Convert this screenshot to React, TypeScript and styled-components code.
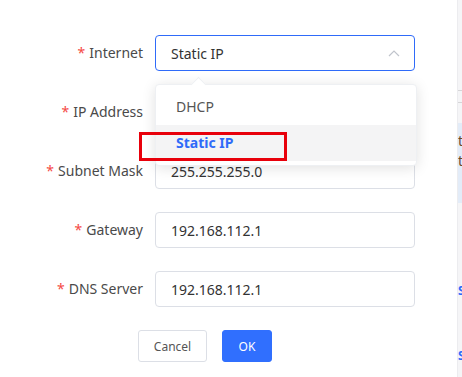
import React from 'react'
import styled, { createGlobalStyle } from 'styled-components'

const GlobalStyle = createGlobalStyle`
	html, body {
		margin: 0;
		padding: 0;
		background: #fff;
	}
	body {
		font-family: 'Noto Sans', 'Liberation Sans', sans-serif;
		font-size: 14px;
		color: #333;
	}
`

const Page = styled.div`
	display: flex;
	width: 462px;
	height: 377px;
	overflow: hidden;
`

const Modal = styled.div`
	position: relative;
	width: 457px;
	flex: none;
	background: #fff;
	padding-top: 35px;
	box-sizing: border-box;
`

const Row = styled.div`
	display: grid;
	grid-template-columns: 143px 260px;
	column-gap: 12px;
	align-items: center;
	height: 36px;
	margin-bottom: 23px;
`

const Label = styled.label`
	text-align: right;
	color: #4a4a4a;
	font-size: 14px;
	line-height: 20px;
	white-space: nowrap;
	&::before {
		content: '*';
		color: #f54a45;
		margin-right: 4px;
	}
`

const Field = styled.div<{ $focused?: boolean }>`
	position: relative;
	height: 36px;
	box-sizing: border-box;
	border: 1px solid ${p => (p.$focused ? '#2f6bf9' : '#dcdfe6')};
	border-radius: 4px;
	display: flex;
	align-items: center;
	padding: 0 14px 0 15px;
	color: #333;
	font-size: 14px;
	background: #fff;
`

const Value = styled.span`
	flex: 1;
`

const Chevron = styled.svg`
	width: 12px;
	height: 8px;
`

const Dropdown = styled.div`
	position: absolute;
	left: -1px;
	top: 48px;
	width: 260px;
	padding: 4px 0;
	background: #fff;
	border: 1px solid #eef0f3;
	border-radius: 4px;
	box-shadow: 0 2px 14px rgba(0, 0, 0, 0.12);
	z-index: 5;
	&::before {
		content: '';
		position: absolute;
		left: 37px;
		top: -6px;
		width: 10px;
		height: 10px;
		background: #fff;
		border-left: 1px solid #eef0f3;
		border-top: 1px solid #eef0f3;
		transform: rotate(45deg);
	}
`

const Option = styled.div<{ $selected?: boolean }>`
	position: relative;
	height: 36px;
	line-height: 36px;
	padding-left: 20px;
	font-size: 14px;
	color: ${p => (p.$selected ? '#2f6bf9' : '#555')};
	font-weight: ${p => (p.$selected ? 700 : 400)};
	background: ${p => (p.$selected ? '#f4f4f5' : 'transparent')};
`

/* red highlight drawn over the selected option */
const Annotation = styled.div`
	position: absolute;
	left: -17px;
	top: 47px;
	width: 148px;
	height: 29px;
	box-sizing: border-box;
	border: 3px solid #e8000b;
	z-index: 6;
`

const Buttons = styled.div`
	display: flex;
	gap: 15px;
	padding-left: 138px;
`

const Button = styled.button<{ $primary?: boolean }>`
	height: 32px;
	width: ${p => (p.$primary ? 50 : 69)}px;
	padding: 0;
	border-radius: 3px;
	font-family: 'Noto Sans', 'Liberation Sans', sans-serif;
	font-size: 12px;
	border: 1px solid ${p => (p.$primary ? '#306ffe' : '#dcdfe6')};
	background: ${p => (p.$primary ? '#306ffe' : '#fff')};
	color: ${p => (p.$primary ? '#fff' : '#555')};
`

const Side = styled.div`
	flex: 1;
	background: #f5f5f7;
	border-left: 1px solid #ececef;
	display: flex;
	flex-direction: column;
	overflow: hidden;
`

const SideRule = styled.div<{ $top: number }>`
	margin-top: ${p => p.$top}px;
	height: 1px;
	background: #d6d6d8;
`

const SideNote = styled.div`
	margin-top: 20px;
	height: 80px;
	background: #e3ecf8;
	padding-top: 8px;
	box-sizing: border-box;
	font-size: 14px;
	line-height: 20px;
	color: #6b4a2a;
`

const SideLink = styled.div<{ $top: number }>`
	margin-top: ${p => p.$top}px;
	font-size: 12px;
	line-height: 12px;
	font-weight: 700;
	color: #2f6bf9;
`

const fields = [
	{ label: 'IP Address', value: '' },
	{ label: 'Subnet Mask', value: '255.255.255.0' },
	{ label: 'Gateway', value: '192.168.112.1' },
	{ label: 'DNS Server', value: '192.168.112.1' },
]

export default function App() {
	return (
		<Page>
			<GlobalStyle />
			<Modal>
				<Row>
					<Label>Internet</Label>
					<Field $focused>
						<Value>Static IP</Value>
						<Chevron viewBox="0 0 12 8">
							<path d="M1 7 L6 2 L11 7" fill="none" stroke="#c0c4cc" strokeWidth="1.2" />
						</Chevron>
						<Dropdown>
							<Option>DHCP</Option>
							<Option $selected>Static IP</Option>
							<Annotation />
						</Dropdown>
					</Field>
				</Row>
				{fields.map(f => (
					<Row key={f.label}>
						<Label>{f.label}</Label>
						<Field>
							<Value>{f.value}</Value>
						</Field>
					</Row>
				))}
				<Buttons>
					<Button>Cancel</Button>
					<Button $primary>OK</Button>
				</Buttons>
			</Modal>
			<Side>
				<SideRule $top={90} />
				<SideRule $top={11} />
				<SideNote>
					t<br />t
				</SideNote>
				<SideLink $top={82}>S</SideLink>
				<SideLink $top={53}>S</SideLink>
			</Side>
		</Page>
	)
}
